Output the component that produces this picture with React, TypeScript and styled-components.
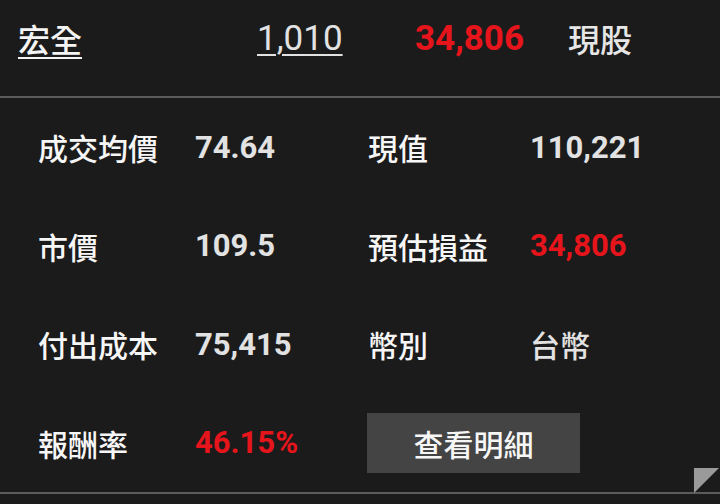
import styled, { createGlobalStyle } from 'styled-components';
import { FC } from "react";

const GlobalStyle = createGlobalStyle`
  html, body {
    margin: 0;
    padding: 0;
    background: #1b1b1b;
  }
  body {
    font-family: Roboto, "Noto Sans CJK TC", sans-serif;
  }
`;

const Page = styled.div`
  position: relative;
  width: 720px;
  height: 504px;
  background: #1b1b1b;
  overflow: hidden;
`;

const Header = styled.div`
  display: grid;
  grid-template-columns: 239px 158px 153px 1fr;
  align-items: center;
  height: 76px;
  padding: 0 0 20px 18px;
  border-bottom: 2px solid #5c5c5c;
`;

const StockName = styled.span`
  font-family: "Noto Sans CJK TC", sans-serif;
  font-size: 32px;
  font-weight: 500;
  color: #f4f4f4;
  text-decoration: underline;
  text-decoration-thickness: 2px;
  text-underline-offset: 5px;
  justify-self: start;
`;

const Shares = styled.span`
  font-family: Roboto, sans-serif;
  font-size: 35px;
  color: #e2e2e2;
  text-decoration: underline;
  text-decoration-thickness: 2px;
  text-underline-offset: 4px;
  justify-self: start;
`;

const Num = styled.span<{ red?: boolean; size?: number }>`
  font-family: Roboto, sans-serif;
  font-size: ${p => p.size ?? 31}px;
  font-weight: 700;
  color: ${p => (p.red ? '#e6141b' : '#e2e2e2')};
`;

const Tag = styled.span`
  font-family: "Noto Sans CJK TC", sans-serif;
  font-size: 32px;
  font-weight: 500;
  color: #e6e6e6;
`;

const Body = styled.div`
  display: grid;
  grid-template-columns: 157px 173px 162px 1fr;
  grid-auto-rows: 98.5px;
  align-items: center;
  padding-left: 38px;
  border-bottom: 2px solid #5c5c5c;
`;

const Label = styled.span`
  font-family: "Noto Sans CJK TC", sans-serif;
  font-size: 30px;
  font-weight: 500;
  color: #f6f6f6;
`;

const Plain = styled.span`
  font-family: "Noto Sans CJK TC", sans-serif;
  font-size: 30px;
  font-weight: 500;
  color: #e2e2e2;
`;

const DetailButton = styled.button`
  width: 213px;
  height: 60px;
  margin-left: -1px;
  border: none;
  background: #444444;
  color: #f6f6f6;
  font-family: "Noto Sans CJK TC", sans-serif;
  font-size: 30px;
  font-weight: 500;
  padding: 0;
  grid-column: 3 / 5;
  justify-self: start;
`;

const Corner = styled.div`
  position: absolute;
  right: 1px;
  bottom: 11px;
  width: 0;
  height: 0;
  border-top: 25px solid #9a9a9a;
  border-right: 25px solid transparent;
`;

const App: FC = () => (
  <Page>
    <GlobalStyle />
    <Header>
      <StockName>宏全</StockName>
      <Shares>1,010</Shares>
      <Num red size={35}>34,806</Num>
      <Tag>現股</Tag>
    </Header>
    <Body>
      <Label>成交均價</Label>
      <Num>74.64</Num>
      <Label>現值</Label>
      <Num>110,221</Num>

      <Label>市價</Label>
      <Num>109.5</Num>
      <Label>預估損益</Label>
      <Num red>34,806</Num>

      <Label>付出成本</Label>
      <Num>75,415</Num>
      <Label>幣別</Label>
      <Plain>台幣</Plain>

      <Label>報酬率</Label>
      <Num red>46.15%</Num>
      <DetailButton>查看明細</DetailButton>
    </Body>
    <Corner />
  </Page>
);

export default App;
